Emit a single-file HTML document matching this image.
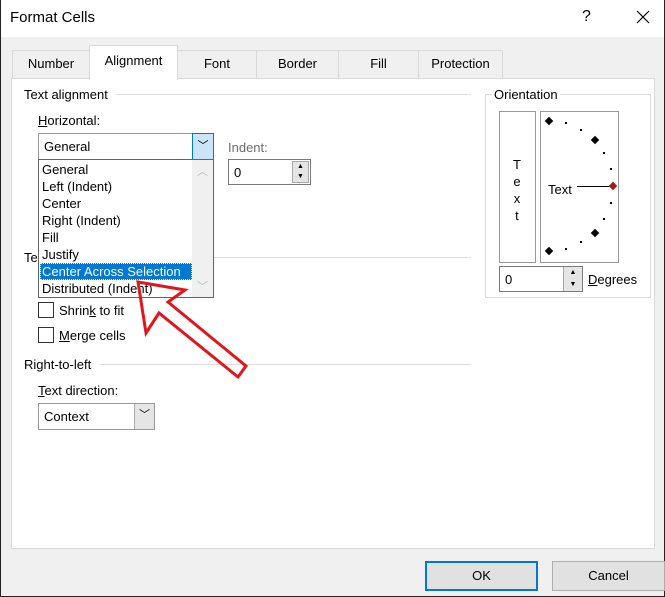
<!DOCTYPE html>
<html><head><style>
*{margin:0;padding:0;box-sizing:border-box}
body{width:665px;height:597px;position:relative;background:#f0f0f0;font-family:"Liberation Sans",sans-serif;font-size:13px;color:#000;overflow:hidden}
.a{position:absolute;white-space:nowrap}
.tab{position:absolute;top:50px;height:29px;border:1px solid #d9d9d9;border-bottom:none;background:#f0f0f0;text-align:center;line-height:26px}
.ln{position:absolute;height:1px;background:#dcdcdc}
.it{position:absolute;left:42px;height:17px;line-height:17px}
.cb{position:absolute;width:16px;height:16px;border:1px solid #333;background:#fff}
.dm{position:absolute;width:6px;height:6px;background:#000;transform:rotate(45deg)}
.dt{position:absolute;width:2px;height:2px;background:#000}
</style></head><body>
<div class="a" style="left:0;top:0;width:665px;height:37px;background:#fff"></div>
<div class="a" style="left:0;top:0;width:1px;height:597px;background:#222"></div>
<div class="a" style="left:664px;top:0;width:1px;height:597px;background:#222"></div>
<div class="a" style="left:0;top:596px;width:665px;height:1px;background:#222"></div>
<div class="a" style="left:10px;top:9px;font-size:15px">Format Cells</div>
<div class="a" style="left:582px;top:8px;font-size:16px">?</div>
<svg class="a" style="left:636px;top:10px" width="14" height="14"><path d="M1 1L13 13M13 1L1 13" stroke="#000" stroke-width="1.2"/></svg>

<div class="tab" style="left:12px;width:78px">Number</div>
<div class="tab" style="left:177px;width:80px">Font</div>
<div class="tab" style="left:256px;width:83px">Border</div>
<div class="tab" style="left:338px;width:81px">Fill</div>
<div class="tab" style="left:418px;width:85px">Protection</div>
<div class="a" style="left:11px;top:78px;width:644px;height:471px;background:#fff;border:1px solid #d9d9d9"></div>
<div class="tab" style="left:89px;top:45px;width:89px;height:35px;background:#fff;border-color:#d9d9d9;line-height:30px;z-index:2">Alignment</div>

<div class="a" style="left:24px;top:87px">Text alignment</div>
<div class="ln" style="left:116px;top:94px;width:355px"></div>
<div class="a" style="left:38px;top:113px"><u>H</u>orizontal:</div>
<div class="a" style="left:38px;top:133px;width:176px;height:27px;border:1px solid #999;background:#fff"></div>
<div class="a" style="left:44px;top:139px">General</div>
<div class="a" style="left:192px;top:133px;width:22px;height:27px;border:1px solid #0078d7;background:#cce4f7;text-align:center;line-height:24px;font-size:11px">﹀</div>
<div class="a" style="left:228px;top:140px;color:#6d6d6d">Indent:</div>
<div class="a" style="left:228px;top:159px;width:83px;height:26px;border:1px solid #7a7a7a;background:#fff;padding:5px 5px">0</div>
<div class="a" style="left:292px;top:161px;width:17px;height:22px;background:#e5e5e5;border:1px solid #aaa;font-size:7px;text-align:center;line-height:10px">▲<br>▼</div>

<div class="a" style="left:24px;top:250px">Te</div>
<div class="ln" style="left:205px;top:257px;width:266px"></div>

<div class="a" style="left:38px;top:159px;width:176px;height:139px;border:1px solid #646464;background:#fff"></div>
<div class="it" style="top:161px">General</div>
<div class="it" style="top:178px">Left (Indent)</div>
<div class="it" style="top:195px">Center</div>
<div class="it" style="top:212px">Right (Indent)</div>
<div class="it" style="top:229px">Fill</div>
<div class="it" style="top:246px">Justify</div>
<div class="a" style="left:40px;top:263px;width:152px;height:17px;background:#0078d7;border:1px dotted #fff"></div>
<div class="it" style="top:263px;color:#fff">Center Across Selection</div>
<div class="it" style="top:280px">Distributed (Indent)</div>
<div class="a" style="left:192px;top:160px;width:21px;height:137px;background:#f0f0f0"></div>
<div class="a" style="left:197px;top:163px;color:#bbb;font-size:11px">︿</div>
<div class="a" style="left:197px;top:278px;color:#bbb;font-size:11px">﹀</div>

<div class="cb" style="left:38px;top:302px"></div>
<div class="a" style="left:59px;top:303px">Shrin<u>k</u> to fit</div>
<div class="cb" style="left:38px;top:327px"></div>
<div class="a" style="left:59px;top:328px"><u>M</u>erge cells</div>

<div class="a" style="left:24px;top:357px">Right-to-left</div>
<div class="ln" style="left:100px;top:364px;width:371px"></div>
<div class="a" style="left:38px;top:383px"><u>T</u>ext direction:</div>
<div class="a" style="left:38px;top:403px;width:117px;height:27px;border:1px solid #999;background:#fff;padding:5px 5px">Context</div>
<div class="a" style="left:134px;top:404px;width:20px;height:25px;background:#e5e5e5;border-left:1px solid #aaa;text-align:center;line-height:22px;font-size:11px">﹀</div>

<div class="a" style="left:485px;top:94px;width:166px;height:204px;border:1px solid #dcdcdc"></div>
<div class="a" style="left:492px;top:87px;background:#fff;padding:0 2px">Orientation</div>
<div class="a" style="left:499px;top:111px;width:37px;height:152px;border:1px solid #999"></div>
<div class="a" style="left:513px;top:156px;text-align:center;line-height:17px">T<br>e<br>x<br>t</div>
<div class="a" style="left:540px;top:111px;width:79px;height:152px;border:1px solid #999"></div>
<div class="a" style="left:548px;top:182px">Text</div>
<div class="a" style="left:577px;top:186px;width:33px;height:1px;background:#000"></div>
<div class="dm" style="left:546px;top:118px"></div>
<div class="dm" style="left:592px;top:137px"></div>
<div class="dm" style="left:592px;top:230px"></div>
<div class="dm" style="left:546px;top:248px"></div>
<div class="dm" style="left:610px;top:183px;background:#a01c1c"></div>
<div class="dt" style="left:565px;top:122px"></div>
<div class="dt" style="left:580px;top:129px"></div>
<div class="dt" style="left:603px;top:152px"></div>
<div class="dt" style="left:610px;top:168px"></div>
<div class="dt" style="left:610px;top:202px"></div>
<div class="dt" style="left:603px;top:218px"></div>
<div class="dt" style="left:580px;top:241px"></div>
<div class="dt" style="left:565px;top:248px"></div>
<div class="a" style="left:499px;top:266px;width:84px;height:26px;border:1px solid #7a7a7a;background:#fff;padding:5px 5px">0</div>
<div class="a" style="left:563px;top:267px;width:19px;height:24px;background:#e5e5e5;border-left:1px solid #aaa;font-size:7px;text-align:center;line-height:12px">▲<br>▼</div>
<div class="a" style="left:588px;top:272px"><u>D</u>egrees</div>

<svg class="a" style="left:0;top:0" width="665" height="597"><polygon points="138,282 185,290 168,302 246,366 238,377 159,313 146,333" fill="none" stroke="#e0161c" stroke-width="3" stroke-linejoin="miter"/></svg>

<div class="a" style="left:425px;top:561px;width:113px;height:30px;background:#e1e1e1;border:2px solid #0078d7;text-align:center;line-height:26px">OK</div>
<div class="a" style="left:552px;top:561px;width:113px;height:30px;background:#e1e1e1;border:1px solid #adadad;text-align:center;line-height:28px">Cancel</div>
</body></html>
